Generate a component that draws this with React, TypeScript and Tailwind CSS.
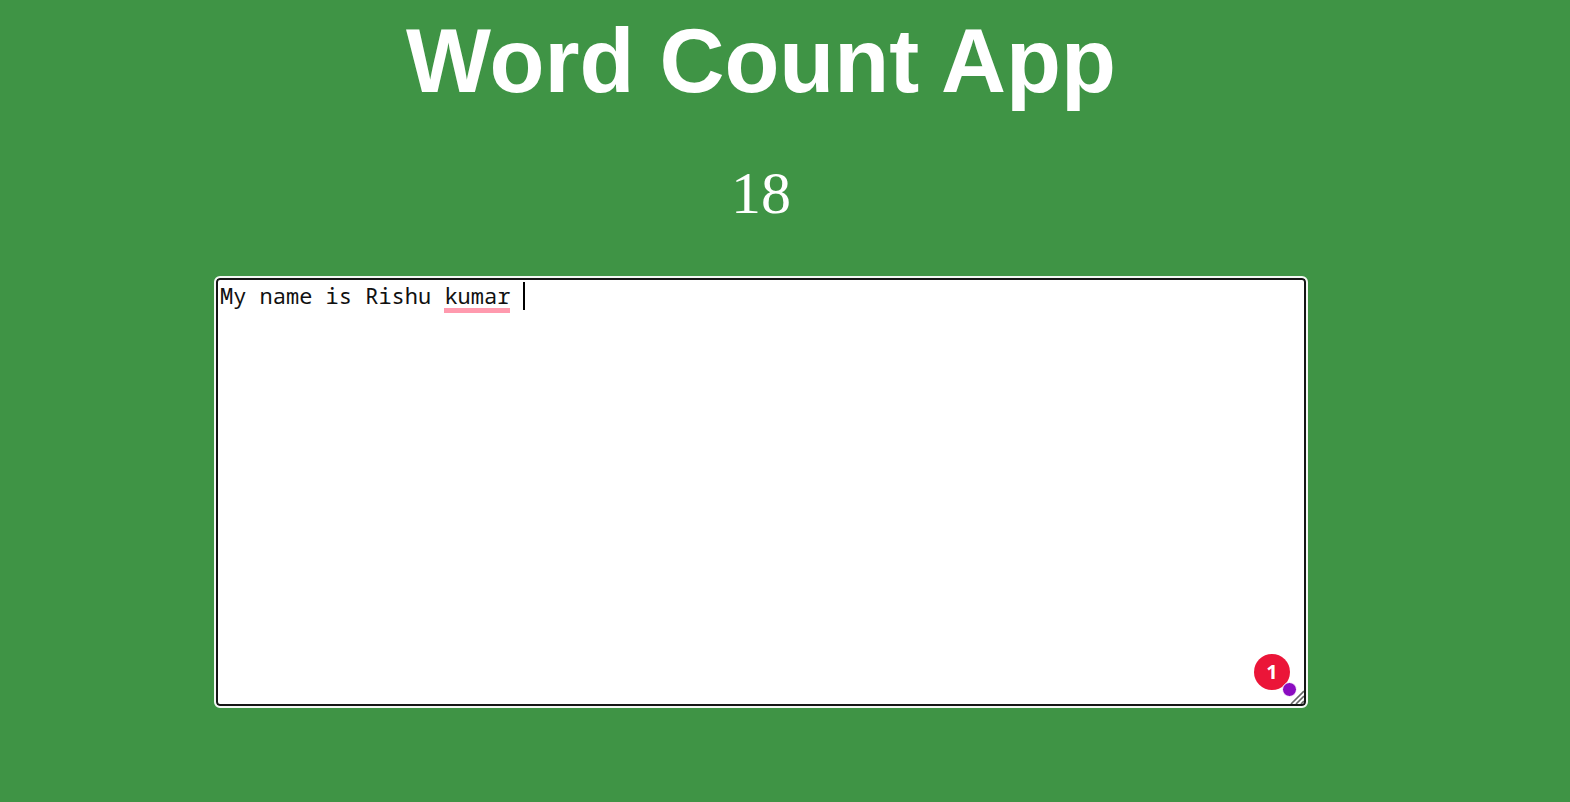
import { useState } from "react";

export default function App() {
  const [text, setText] = useState("My name is Rishu kumar ");
  return (
    <main className="flex min-h-screen flex-col items-center bg-[#3f9445] pr-12">
      <h1 className="pt-2 font-['Liberation_Sans',sans-serif] text-[90px] leading-[106px] font-bold text-white">
        Word Count App
      </h1>
      <output htmlFor="words" className="mt-10 font-['Liberation_Serif',serif] text-[60px] leading-[78px] text-white">
        {text.replace(/\s/g, "").length}
      </output>
      <div className="relative mt-11 flex w-[1094px] max-w-full">
        <textarea
          id="words"
          aria-label="Text to count"
          spellCheck={false}
          value={text}
          onChange={(e) => setText(e.target.value)}
          className="h-[432px] w-full resize rounded-md border-2 border-[#f4f8f4] bg-white px-1 py-[3px] font-['Noto_Sans_Mono','DejaVu_Sans_Mono',monospace] text-[22px] leading-[28px] text-[#111111] ring-2 ring-[#151515] outline-none ring-inset [&::-webkit-resizer]:bg-transparent"
        />
        <span className="absolute top-[32px] left-[230px] h-[5px] w-[66px] bg-[#ff9aae]" />
        <span className="absolute top-[6px] left-[309px] h-7 w-[2px] bg-black" />
        <svg className="pointer-events-none absolute right-1 bottom-1 size-[14px]" viewBox="0 0 14 14" fill="none" stroke="#666" strokeWidth="1.6">
          <path d="M1 14 14 1M6 14 14 6M11 14 14 11" />
        </svg>
        <span className="absolute right-[18px] bottom-[18px] flex size-9 items-center justify-center rounded-full bg-[#eb1538] font-['Noto_Sans',sans-serif] text-[20px] font-bold text-white">
          1
        </span>
        <span className="absolute right-[11px] bottom-[11px] size-[15px] rounded-full border border-white bg-[#8b0cc0]" />
      </div>
    </main>
  );
}
